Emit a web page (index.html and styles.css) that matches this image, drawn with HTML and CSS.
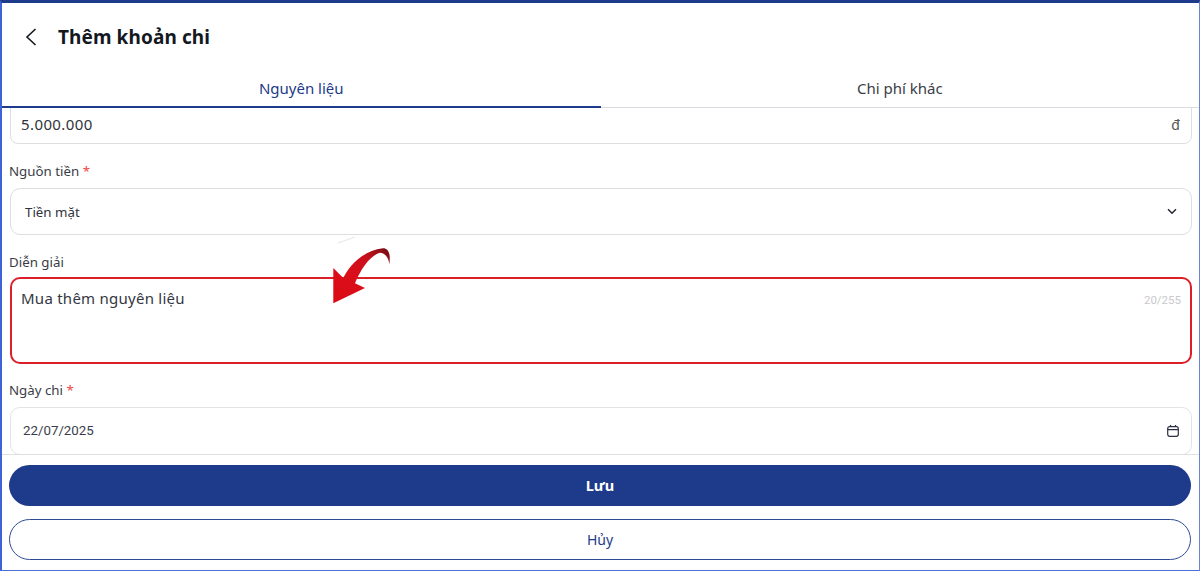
FILE: index.html
```html
<!DOCTYPE html>
<html lang="vi">
<head>
<meta charset="utf-8">
<title>Thêm khoản chi</title>
<link rel="stylesheet" href="styles.css">
</head>
<body>
<div class="frame">
  <header class="header">
    <svg class="back" width="12" height="18" viewBox="0 0 12 18"><path d="M10.5 1 L2 9 L10.5 17" fill="none" stroke="#14181f" stroke-width="1.6"/></svg>
    <h1 class="title">Thêm khoản chi</h1>
  </header>
  <nav class="tabs">
    <div class="tab tab-active">Nguyên liệu</div>
    <div class="tab">Chi phí khác</div>
  </nav>
  <main class="content">
    <div class="field-amount">
      <span class="amount">5.000.000</span>
      <span class="currency">đ</span>
    </div>
    <label class="label label-source">Nguồn tiền <span class="req">*</span></label>
    <div class="select">
      <span>Tiền mặt</span>
      <svg width="10" height="7" viewBox="0 0 10 7"><path d="M1 1.2 L5 5.2 L9 1.2" fill="none" stroke="#23262e" stroke-width="1.5"/></svg>
    </div>
    <label class="label label-desc">Diễn giải</label>
    <div class="textarea">
      <span class="desc">Mua thêm nguyên liệu</span>
      <span class="count">20/255</span>
    </div>
    <label class="label label-date">Ngày chi <span class="req">*</span></label>
    <div class="date">
      <span>22/07/2025</span>
      <svg width="12" height="12" viewBox="0 0 12 12"><rect x="0.7" y="1.7" width="10.6" height="9.6" rx="2" fill="none" stroke="#2b2f45" stroke-width="1.2"/><path d="M0.7 4.6 H11.3 M3.5 0 V2 M8.5 0 V2" fill="none" stroke="#2b2f45" stroke-width="1.2"/></svg>
    </div>
  </main>
  <footer class="footer">
    <button class="btn btn-save">Lưu</button>
    <button class="btn btn-cancel">Hủy</button>
  </footer>
  <svg class="arrow" width="60" height="57" viewBox="0 0 60 57">
    <defs>
      <linearGradient id="ag" x1="0" y1="1" x2="1" y2="0">
        <stop offset="0" stop-color="#dc0a14"/>
        <stop offset="0.45" stop-color="#d90f1a"/>
        <stop offset="0.72" stop-color="#c8101c"/>
        <stop offset="1" stop-color="#6f0d12"/>
      </linearGradient>
    </defs>
    <path d="M5 -5 L22 -11" fill="none" stroke="#e6e6e6" stroke-width="1"/>
    <path d="M0.3 20 L10.3 30 C15 20 28 3 50 0.3 C55 0.3 58 5 56.3 16.3 C55.5 9 52 5 47 4.7 C38 7 28 20 22 35.3 L32 40 L0.3 55.3 Z" fill="url(#ag)"/>
  </svg>
</div>
</body>
</html>
```
FILE: styles.css
```css
* { box-sizing: border-box; }
html, body { margin: 0; padding: 0; }
body { background: #fff; font-family: "Noto Sans", "Open Sans", sans-serif; color: #3a3d46; }
.frame {
  position: relative;
  height: 571px;
  display: flex;
  flex-direction: column;
  border-top: 3px solid #1e3a8a;
  border-left: 2px solid #3f63d6;
  border-right: 1px solid #6d86d4;
  border-bottom: 1px solid #4f6fd8;
  overflow: hidden;
}
.header { height: 65px; flex: none; display: flex; align-items: center; padding: 3px 0 0 23px; gap: 21px; }
.back { display: block; }
.title { margin: 0; font-size: 19px; line-height: 28px; font-weight: 700; color: #14181f; font-family: "Noto Sans", sans-serif; letter-spacing: 0.1px; }
.tabs { height: 40px; flex: none; display: flex; border-bottom: 1px solid #d9dbe0; }
.tab { flex: 1; text-align: center; font-size: 15px; line-height: 41px; color: #3a3d46; }
.tab-active { color: #1e3a8a; border-bottom: 2px solid #1e3a8a; height: 40px; }
.content { flex: none; height: 346px; overflow: hidden; padding: 0 7px 0 8px; }
.field-amount {
  margin-top: -12px;
  height: 48px;
  border: 1px solid #dcdee2;
  border-radius: 8px;
  display: flex; align-items: center; justify-content: space-between;
  padding: 8px 11px 0 10px;
  font-size: 15px;
}
.amount { letter-spacing: 0.4px; color: #30333b; }
.currency { font-size: 14px; color: #555; }
.label { display: block; margin-left: -1px; font-size: 13.3px; line-height: 20px; color: #3a3d46; }
.label-source { margin-top: 17px; }
.label-desc { margin-top: 17px; }
.label-date { margin-top: 16px; }
.req { color: #ef4444; }
.select {
  margin-top: 7px;
  height: 47px;
  border: 1px solid #dcdee2;
  border-radius: 10px;
  display: flex; align-items: center; justify-content: space-between;
  padding: 0 14px 0 14px;
  font-size: 13.3px; color: #30333b;
}
.textarea {
  margin-top: 5px;
  height: 87px;
  border: 2px solid #dc1f26;
  border-radius: 10px;
  display: flex; justify-content: space-between; align-items: flex-start;
  padding: 8px 9px 0 9px;
}
.desc { font-size: 15px; line-height: 22px; letter-spacing: 0.25px; color: #34373f; }
.count { font-family: Roboto, sans-serif; font-size: 11.5px; line-height: 26px; color: #c9cacd; }
.date {
  margin-top: 7px;
  height: 48px;
  border: 1px solid #e2e3e6;
  border-radius: 10px;
  display: flex; align-items: center; justify-content: space-between;
  padding: 0 12px 1px 12px;
  font-family: Roboto, sans-serif; font-size: 13.3px; color: #3a3d4c;
}
.footer { flex: 1; border-top: 1px solid #dfe0e3; padding: 10px 8px 0 7px; display: flex; flex-direction: column; gap: 13px; background: #fff; z-index: 1; }
.btn { height: 41px; flex: none; border-radius: 21px; font-family: "Noto Sans", sans-serif; font-size: 14.5px; cursor: pointer; }
.btn-save { background: #1e3a8a; border: none; color: #fff; font-weight: 700; padding-bottom: 3px; }
.btn-cancel { background: #fff; border: 1px solid #2f4a94; color: #1e3a8a; font-size: 14px; }
.arrow { position: absolute; left: 331px; top: 245px; z-index: 2; overflow: visible; }
```
